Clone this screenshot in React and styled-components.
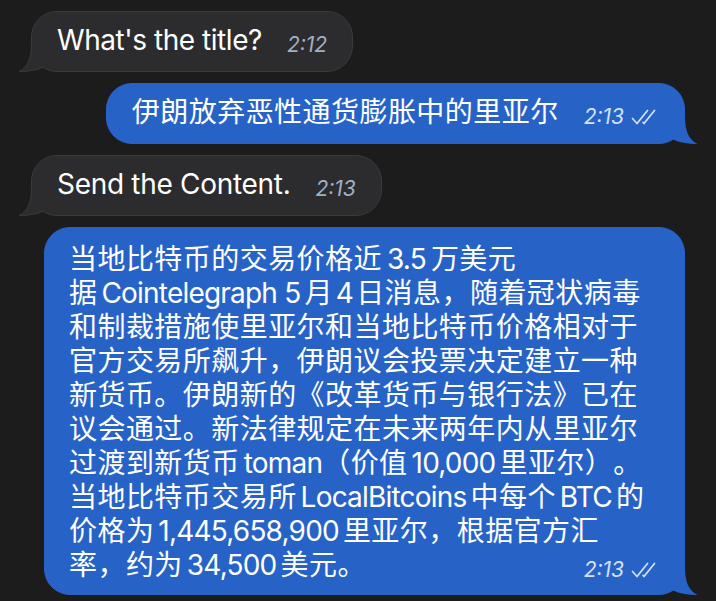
import React from 'react';
import styled, { createGlobalStyle } from 'styled-components';

const GlobalStyle = createGlobalStyle`
  html, body {
    margin: 0;
    background: #1c1c1d;
  }
  body {
    font-family: Inter, "Noto Sans CJK SC", sans-serif;
    -webkit-font-smoothing: antialiased;
    text-spacing-trim: space-all;
  }
`;

const Chat = styled.div`
  display: flex;
  flex-direction: column;
  gap: 11px;
  padding: 11px 31px;
  min-height: 601px;
  box-sizing: border-box;
`;

const Row = styled.div`
  display: flex;
  justify-content: ${({ $out }) => ($out ? 'flex-end' : 'flex-start')};
`;

const Bubble = styled.div`
  position: relative;
  box-sizing: border-box;
  width: ${({ $width }) => ($width ? `${$width}px` : 'auto')};
  background: ${({ $out }) => ($out ? '#2763c7' : '#2c2c2e')};
  border: 1px solid ${({ $out }) => ($out ? '#2763c7' : '#3a3a3c')};
  border-radius: 26px;
  padding: ${({ $pad }) => $pad || '12px 25px'};
  color: #fff;
  font-size: 28px;
  line-height: 34px;
  letter-spacing: 0.45px;
`;

const Content = styled.div`
  position: relative;
  z-index: 1;
  display: flex;
  align-items: baseline;
  gap: 25px;
`;

const Lines = styled.div`
  position: relative;
  z-index: 1;
`;

const Line = styled.div`
  white-space: nowrap;
`;

const LastLine = styled.div`
  display: flex;
  align-items: baseline;
  justify-content: space-between;
  white-space: nowrap;
`;

/* latin runs inside chinese text: tighter tracking, small gap either side */
const Lat = styled.span`
  letter-spacing: ${({ $track = -0.8 }) => $track}px;
  margin: 0 ${({ $r = 4 }) => $r}px 0 ${({ $l = 4 }) => $l}px;
`;

const Meta = styled.span`
  display: inline-flex;
  align-items: center;
  gap: 7px;
  font-size: 21px;
  font-style: italic;
  letter-spacing: 0;
  color: ${({ $out }) => ($out ? '#d6e1f5' : '#9fb0c6')};
  transform: translateY(2px);
`;

const TailSvg = styled.svg`
  position: absolute;
  bottom: -1px;
  ${({ $out }) => ($out ? 'right: -14px; transform: scaleX(-1);' : 'left: -14px;')}
  width: 40px;
  height: 40px;
  z-index: 0;
  overflow: visible;
`;

const Tail = ({ out }) => (
  <TailSvg $out={out} viewBox="0 0 40 40">
    <path
      d="M13 12 C13 26 10 35 0.5 40 Q16 40 25 35.6 L34 30 L34 12 Z"
      fill={out ? '#2763c7' : '#2c2c2e'}
    />
    {!out && (
      <path
        d="M13.5 12 C13.5 26 10.5 35 1 39.5 Q16 39.5 25 35.1"
        fill="none"
        stroke="#3a3a3c"
        strokeWidth="1"
      />
    )}
  </TailSvg>
);

const Checks = () => (
  <svg width="28" height="16" viewBox="0 0 28 16" fill="none" stroke="currentColor"
    strokeWidth="1.7" strokeLinecap="round" strokeLinejoin="round">
    <path d="M1.5 9.5 L6 14.5 L16.5 1.5" />
    <path d="M12 13.3 L13 14.5 L23.5 1.5" />
  </svg>
);

const Time = ({ out, children }) => (
  <Meta $out={out}>
    {children}
    {out && <Checks />}
  </Meta>
);

export default function App() {
  return (
    <>
      <GlobalStyle />
      <Chat>
        <Row>
          <Bubble $pad="11px 25px">
            <Tail />
            <Content>
              <Lat $l={0} $r={0} $track={-0.45}>What's the title?</Lat>
              <Time>2:12</Time>
            </Content>
          </Bubble>
        </Row>
        <Row $out>
          <Bubble $out $pad="11px 25px">
            <Tail out />
            <Content>
              <span>伊朗放弃恶性通货膨胀中的里亚尔</span>
              <Time out>2:13</Time>
            </Content>
          </Bubble>
        </Row>
        <Row>
          <Bubble $pad="11px 25px">
            <Tail />
            <Content>
              <Lat $l={0} $r={0} $track={-0.3}>Send the Content.</Lat>
              <Time>2:13</Time>
            </Content>
          </Bubble>
        </Row>
        <Row $out>
          <Bubble $out $width={641} $pad="14px 25px 9px 24px">
            <Tail out />
            <Lines>
              <Line>当地比特币的交易价格近<Lat $l={5} $r={5}>3.5</Lat>万美元</Line>
              <Line>据<Lat>Cointelegraph 5</Lat>月<Lat $l={3} $r={3}>4</Lat>日消息，随着冠状病毒</Line>
              <Line>和制裁措施使里亚尔和当地比特币价格相对于</Line>
              <Line>官方交易所飙升，伊朗议会投票决定建立一种</Line>
              <Line>新货币。伊朗新的《改革货币与银行法》已在</Line>
              <Line>议会通过。新法律规定在未来两年内从里亚尔</Line>
              <Line>过渡到新货币<Lat $r={0}>toman</Lat>（价值<Lat>10,000</Lat>里亚尔）。</Line>
              <Line>当地比特币交易所<Lat>LocalBitcoins</Lat>中每个<Lat>BTC</Lat>的</Line>
              <Line>价格为<Lat>1,445,658,900</Lat>里亚尔，根据官方汇</Line>
              <LastLine>
                <span>率，约为<Lat>34,500</Lat>美元。</span>
                <Time out>2:13</Time>
              </LastLine>
            </Lines>
          </Bubble>
        </Row>
      </Chat>
    </>
  );
}
